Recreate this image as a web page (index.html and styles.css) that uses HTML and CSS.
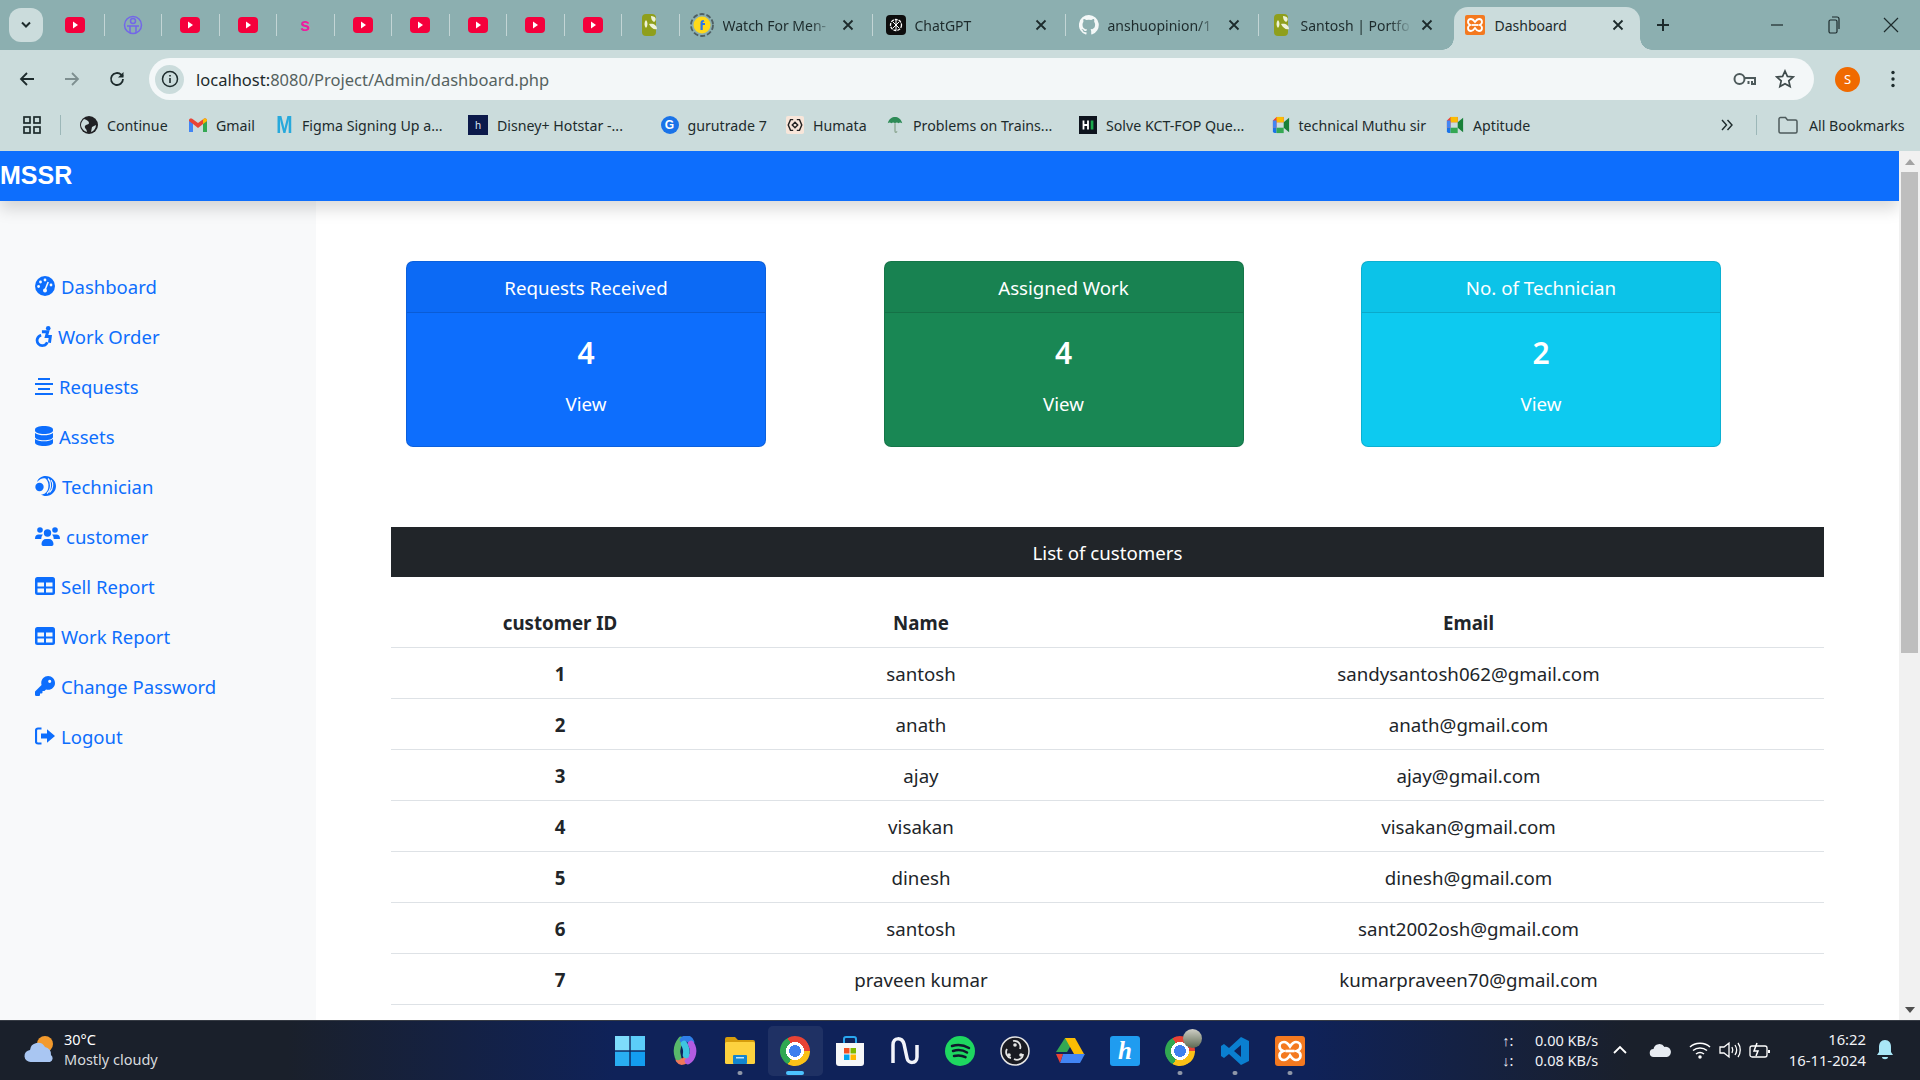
FILE: index.html
```html
<!DOCTYPE html>
<html lang="en">
<head>
	<meta charset="utf-8">
	<title>Dashboard</title>
	<link rel="stylesheet" href="styles.css">
</head>
<body>
<svg class="defs" width="0" height="0">
	<symbol id="yt" viewBox="0 0 20 16"><rect width="20" height="16" rx="4" fill="#f5003c"/><path d="M8 4.500l5 3.500-5 3.500z" fill="#fff"/></symbol>
	<symbol id="x" viewBox="0 0 12 12"><path d="M1.500 1.500l9 9M10.500 1.500l-9 9" stroke="#1d2b2c" stroke-width="1.800" fill="none"/></symbol>
	<symbol id="leaf" viewBox="0 0 20 24"><rect x="2" y="1" width="14" height="22" rx="4" fill="#8f9f1c"/><path d="M11 3c5 0 6 4 3 6-2-1-3-3-3-6zM9 11c4-1 8 1 8 5-3 1-6-1-8-5zM6 7c2 2 2 6 0 8-2-2-2-6 0-8z" fill="#eef2d8"/></symbol>
	<symbol id="meet" viewBox="0 0 20 20"><path d="M1 5l4-4h8v6H5v6H1z" fill="#ea4335"/><path d="M5 1h8v6H5z" fill="#fbbc04"/><path d="M1 13h4v6H3a2 2 0 0 1-2-2z" fill="#1a73e8"/><path d="M5 13h8v6H5z" fill="#34a853"/><path d="M13 7l6-5v16l-6-5z" fill="#188038"/><rect x="1" y="5" width="4" height="8" fill="#4285f4"/></symbol>
	<symbol id="gauge" viewBox="0 0 20 20"><circle cx="10" cy="10" r="10" fill="currentColor"/><g fill="#f8f9fa"><circle cx="10" cy="4" r="1.400"/><circle cx="5.500" cy="6" r="1.400"/><circle cx="3.600" cy="10.500" r="1.400"/><circle cx="16" cy="9" r="1.400"/><circle cx="10" cy="14.500" r="2"/></g><path d="M10 14l3.200-8" stroke="#f8f9fa" stroke-width="1.600"/></symbol>
	<symbol id="chair" viewBox="0 0 16 20"><circle cx="12.500" cy="2.200" r="2.200" fill="currentColor"/><path d="M6.500 5.500h5.500l-1.300 4.500h3.800l-.8 6" fill="none" stroke="currentColor" stroke-width="2.800"/><path d="M5.800 8.800a5 5 0 1 0 5.800 6.600" fill="none" stroke="currentColor" stroke-width="2.600"/></symbol>
	<symbol id="lines" viewBox="0 0 18 18"><path d="M3 2h12M0 7h18M3 12h12M0 17h18" stroke="currentColor" stroke-width="2.200" fill="none"/></symbol>
	<symbol id="db" viewBox="0 0 18 20"><path d="M0 3.500C0 1.500 4 0 9 0s9 1.500 9 3.500v1C18 6.500 14 8 9 8S0 6.500 0 4.500z" fill="currentColor"/><path d="M0 7c2 1.700 5.500 2.300 9 2.300S16 8.700 18 7v4c0 2-4 3.300-9 3.300S0 13 0 11z" fill="currentColor"/><path d="M0 13c2 1.700 5.500 2.300 9 2.300S16 14.700 18 13v3.500C18 18.500 14 20 9 20s-9-1.500-9-3.500z" fill="currentColor"/></symbol>
	<symbol id="speak" viewBox="0 0 21 20"><circle cx="4.500" cy="11" r="4.200" fill="currentColor"/><path d="M2 6C3 2.500 6.500 0 10.500 0 16 0 21 4.500 21 10s-4.500 10-10 10c-2 0-4-.6-5-1.500 3 .2 6-2 7-5.500s.5-8-2.500-10.500C8 1.500 4.500 3 2 6z" fill="currentColor"/><path d="M13 2.500c3.500 3.500 3.500 11-1 15M16 4c2.500 3 2.500 9-1.500 12.500" stroke="#f8f9fa" stroke-width="1.100" fill="none"/></symbol>
	<symbol id="users" viewBox="0 0 25 20"><circle cx="5" cy="4" r="2.800" fill="currentColor"/><circle cx="20" cy="4" r="2.800" fill="currentColor"/><circle cx="12.500" cy="7" r="3.700" fill="currentColor"/><path d="M0 12.500C0 10 1.500 8.500 3.500 8.500h3c.5 0 1 .1 1.400.3-1 1-1.600 2.500-1.600 4.200H.5a.5.5 0 0 1-.5-.5zM25 12.500C25 10 23.500 8.500 21.500 8.500h-3c-.5 0-1 .1-1.400.3 1 1 1.600 2.500 1.600 4.200h5.800a.5.5 0 0 0 .5-.5zM6.500 18c0-3 2-5 4.500-5h3c2.500 0 4.500 2 4.500 5 0 1-.7 2-1.700 2H8.200c-1 0-1.700-1-1.700-2z" fill="currentColor"/></symbol>
	<symbol id="table" viewBox="0 0 20 18"><rect width="20" height="18" rx="2.500" fill="currentColor"/><path d="M2.500 5.500h6.500v4H2.500zM11 5.500h6.500v4H11zM2.500 11.500h6.500v4H2.500zM11 11.500h6.500v4H11z" fill="#f8f9fa"/></symbol>
	<symbol id="key" viewBox="0 0 512 512"><path d="M336 352c97.200 0 176-78.800 176-176S433.200 0 336 0S160 78.800 160 176c0 18.700 2.900 36.800 8.300 53.700L7 391c-4.500 4.500-7 10.600-7 17v80c0 13.300 10.700 24 24 24h80c13.300 0 24-10.700 24-24V448h40c13.300 0 24-10.700 24-24V384h40c6.400 0 12.500-2.500 17-7l33.300-33.300c16.900 5.400 35 8.300 53.700 8.300zM376 96a40 40 0 1 1 0 80 40 40 0 1 1 0-80z" fill="currentColor"/></symbol>
	<symbol id="logout" viewBox="0 0 20 18"><path d="M6.500 1.500H3A2 2 0 0 0 1 3.500v11a2 2 0 0 0 2 2h3.500" fill="none" stroke="currentColor" stroke-width="2.200"/><path d="M6 6.500h6V2.200L20 9l-8 6.800v-4.300H6z" fill="currentColor"/></symbol>
	<symbol id="xampp" viewBox="0 0 20 20"><rect width="20" height="20" rx="2" fill="#f4791f"/><path d="M6 4c2 0 3 1.500 4 3 1-1.500 2-3 4-3s3 1.500 3 3-1 2.500-2.500 3c1.500.5 2.500 1.500 2.500 3s-1 3-3 3-3-1.500-4-3c-1 1.500-2 3-4 3s-3-1.500-3-3 1-2.500 2.500-3C4 9.500 3 8.500 3 7s1-3 3-3z" fill="none" stroke="#fff" stroke-width="1.800"/><path d="M7 10h6" stroke="#fff" stroke-width="1.800"/></symbol>
</svg>

<div class="screen">
	<div class="tabstrip">
		<div class="tab-list-btn"><svg width="12" height="8" viewBox="0 0 12 8"><path d="M2 1.500l4 4 4-4" stroke="#1d2b2c" stroke-width="2" fill="none"/></svg></div>
		<div class="pin"><svg class="yt"><use href="#yt"/></svg></div><i class="sep"></i>
		<div class="pin"><svg width="20" height="20" viewBox="0 0 20 20" fill="none" stroke="#7367e8" stroke-width="1.500"><circle cx="10" cy="10" r="8.500"/><circle cx="10" cy="6" r="2.500"/><path d="M4 11h12M7 11v7M13 11v7"/></svg></div><i class="sep"></i>
		<div class="pin"><svg class="yt"><use href="#yt"/></svg></div><i class="sep"></i>
		<div class="pin"><svg class="yt"><use href="#yt"/></svg></div><i class="sep"></i>
		<div class="pin"><span class="pink-s">s</span></div><i class="sep"></i>
		<div class="pin"><svg class="yt"><use href="#yt"/></svg></div><i class="sep"></i>
		<div class="pin"><svg class="yt"><use href="#yt"/></svg></div><i class="sep"></i>
		<div class="pin"><svg class="yt"><use href="#yt"/></svg></div><i class="sep"></i>
		<div class="pin"><svg class="yt"><use href="#yt"/></svg></div><i class="sep"></i>
		<div class="pin"><svg class="yt"><use href="#yt"/></svg></div><i class="sep"></i>
		<div class="pin"><svg class="fav-tall"><use href="#leaf"/></svg></div><i class="sep"></i>

		<div class="tab">
			<svg class="fav-lg" viewBox="0 0 24 24"><circle cx="12" cy="12" r="11" fill="none" stroke="#4f5f64" stroke-width="1.800" stroke-dasharray="5 2"/><circle cx="12" cy="12" r="8.500" fill="#ffd91a"/><path d="M13.500 7c-2 0-3 1-3 3v7h2.200v-5h2.300v-2h-2.300c0-1 .3-1.200 1.800-1.200z" fill="#2874f0"/></svg>
			<span class="tab-title">Watch For Men-</span>
			<svg class="close"><use href="#x"/></svg>
		</div><i class="sep"></i>
		<div class="tab">
			<svg class="fav" viewBox="0 0 20 20"><rect width="20" height="20" rx="4" fill="#0d0d0d"/><circle cx="10" cy="10" r="5.500" fill="none" stroke="#fff" stroke-width="1.300" stroke-dasharray="3 1"/><path d="M7 7l6 6M13 7l-6 6M10 5v10" stroke="#fff"/></svg>
			<span class="tab-title">ChatGPT</span>
			<svg class="close"><use href="#x"/></svg>
		</div><i class="sep"></i>
		<div class="tab">
			<svg class="fav" viewBox="0 0 20 20"><path d="M10 0a10 10 0 0 0-3.200 19.500c.5.100.7-.2.700-.5v-1.800c-2.800.6-3.400-1.200-3.400-1.200-.5-1.100-1.100-1.400-1.100-1.400-.9-.6.100-.6.100-.6 1 .1 1.500 1 1.500 1 .9 1.500 2.300 1.100 2.900.8.100-.6.300-1.100.6-1.300-2.200-.3-4.600-1.100-4.600-5 0-1.100.4-2 1-2.700-.1-.3-.4-1.300.1-2.700 0 0 .8-.3 2.700 1a9.400 9.400 0 0 1 5 0c1.900-1.300 2.700-1 2.700-1 .5 1.400.2 2.400.1 2.700.6.700 1 1.600 1 2.700 0 3.900-2.300 4.700-4.600 5 .4.300.7.900.7 1.900V19c0 .3.200.6.700.5A10 10 0 0 0 10 0z" fill="#f4f8f8"/></svg>
			<span class="tab-title">anshuopinion/1</span>
			<svg class="close"><use href="#x"/></svg>
		</div><i class="sep"></i>
		<div class="tab tab-wide">
			<svg class="fav-tall"><use href="#leaf"/></svg>
			<span class="tab-title">Santosh | Portfo</span>
			<svg class="close"><use href="#x"/></svg>
		</div>
		<div class="tab tab-active">
			<svg class="fav"><use href="#xampp"/></svg>
			<span class="tab-title">Dashboard</span>
			<svg class="close"><use href="#x"/></svg>
		</div>
		<svg class="newtab" width="16" height="16" viewBox="0 0 16 16"><path d="M8 2v12M2 8h12" stroke="#1d2b2c" stroke-width="2"/></svg>
		<div class="win-btns">
			<svg width="14" height="14" viewBox="0 0 14 14"><path d="M1 7h12" stroke="#1d2b2c" stroke-width="1.200"/></svg>
			<svg width="14" height="18" viewBox="0 0 14 18" fill="none" stroke="#1d2b2c" stroke-width="1.200"><rect x="2" y="4" width="8" height="13" rx="1.500"/><path d="M5 1h5a2 2 0 0 1 2 2v10"/></svg>
			<svg width="16" height="16" viewBox="0 0 16 16"><path d="M1 1l14 14M15 1L1 15" stroke="#1d2b2c" stroke-width="1.200"/></svg>
		</div>
	</div>

	<div class="toolbar">
		<svg class="nav-icon" viewBox="0 0 18 18"><path d="M16 9H3M9 3L3 9l6 6" fill="none" stroke="#1d2b2c" stroke-width="1.800"/></svg>
		<svg class="nav-icon" viewBox="0 0 18 18"><path d="M2 9h13M9 3l6 6-6 6" fill="none" stroke="#7e8f90" stroke-width="1.800"/></svg>
		<svg class="nav-icon" viewBox="0 0 18 18"><path d="M15 9a6 6 0 1 1-1.800-4.300L15 6.500" fill="none" stroke="#1d2b2c" stroke-width="1.800"/><path d="M15.500 2v5.500H10z" fill="#1d2b2c"/></svg>
		<div class="omnibox">
			<span class="info-chip"><svg width="18" height="18" viewBox="0 0 18 18"><circle cx="9" cy="9" r="7.500" fill="none" stroke="#1d2b2c" stroke-width="1.500"/><path d="M9 8v5M9 5v1.600" stroke="#1d2b2c" stroke-width="1.600"/></svg></span>
			<span class="url"><b>localhost:</b>8080/Project/Admin/dashboard.php</span>
			<svg class="omni-key" width="24" height="16" viewBox="0 0 24 16" fill="none" stroke="#4d5a5b" stroke-width="2"><circle cx="6.500" cy="8" r="5"/><path d="M11.500 7H22v6h-3V10M15.500 10v3"/></svg>
			<svg class="omni-star" width="20" height="20" viewBox="0 0 20 20"><path d="M10 2l2.400 5.400 5.800.6-4.400 3.900 1.300 5.700L10 14.700l-5.100 2.900 1.300-5.700L1.800 8l5.800-.6z" fill="none" stroke="#3f4b4c" stroke-width="1.700"/></svg>
		</div>
		<span class="avatar">S</span>
		<svg class="kebab" width="4" height="18" viewBox="0 0 4 18"><circle cx="2" cy="2.500" r="1.700" fill="#1d2b2c"/><circle cx="2" cy="9" r="1.700" fill="#1d2b2c"/><circle cx="2" cy="15.500" r="1.700" fill="#1d2b2c"/></svg>
	</div>

	<div class="bookmarks">
		<svg class="apps" width="18" height="18" viewBox="0 0 18 18" fill="none" stroke="#1d2b2c" stroke-width="1.700"><rect x="1" y="1" width="6" height="6"/><rect x="11" y="1" width="6" height="6"/><rect x="1" y="11" width="6" height="6"/><rect x="11" y="11" width="6" height="6"/></svg>
		<i class="bm-sep"></i>
		<div class="bm-list">
			<div class="bm"><svg class="bm-ico" viewBox="0 0 18 18"><circle cx="9" cy="9" r="9" fill="#202124"/><path d="M4 3c3 1 5 2 5 4s-3 1-4 3 2 3 2 6c-3-1-6-4-6-7 0-2 1-4 3-6zM12 11l4-2c0 3-2 6-5 7z" fill="#cbdcdc"/></svg><span>Continue</span></div>
			<div class="bm"><svg class="bm-ico" viewBox="0 0 18 14"><path d="M0 2.500V14h4V6l5 4 5-4v8h4V2.500C18 .5 16 0 14.500 1L9 5 3.500 1C2 0 0 .5 0 2.500z" fill="#ea4335"/><path d="M0 3v11h4V6z" fill="#4285f4"/><path d="M14 6v8h4V3z" fill="#34a853"/><path d="M18 2.500C18 .5 16 0 14.500 1L14 1.500V6l4-3z" fill="#fbbc04"/></svg><span>Gmail</span></div>
			<div class="bm"><span class="figma-m">M</span><span>Figma Signing Up a...</span></div>
			<div class="bm"><span class="hotstar">h</span><span>Disney+ Hotstar -...</span></div>
			<div class="bm"><span class="guru">G</span><span>gurutrade 7</span></div>
			<div class="bm"><svg class="bm-ico" viewBox="0 0 20 20"><rect width="20" height="20" rx="2" fill="#f8e6da"/><path d="M8 4H5L2.500 10 5 16h3M12 4h3l2.500 6L15 16h-3M10 7l3 3-3 3-3-3z" fill="none" stroke="#222" stroke-width="1.600"/></svg><span>Humata</span></div>
			<div class="bm"><svg class="bm-ico" viewBox="0 0 18 20"><path d="M1 8C2 3 6 1 9 1s7 2 8 7c-2-1-3-1-4 0-1-1-3-1-4 0-1-1-3-1-4 0-1-1-3-1-4 0z" fill="#2e8b57"/><path d="M9 8v9c0 1.500 2 1.500 2 0" fill="none" stroke="#8aa58f" stroke-width="1.400"/></svg><span>Problems on Trains...</span></div>
			<div class="bm"><svg class="bm-ico" viewBox="0 0 20 20"><rect width="20" height="20" fill="#0e141e"/><path d="M4 5h2v10H4zM9 5h2v10H9zM5 9h5v2H5z" fill="#fff"/><rect x="13" y="5" width="3" height="10" fill="#1ba94c"/></svg><span>Solve KCT-FOP Que...</span></div>
			<div class="bm"><svg class="bm-ico"><use href="#meet"/></svg><span>technical Muthu sir</span></div>
			<div class="bm"><svg class="bm-ico"><use href="#meet"/></svg><span>Aptitude</span></div>
		</div>
		<svg class="more" width="12" height="12" viewBox="0 0 12 12" fill="none" stroke="#1d2b2c" stroke-width="1.400"><path d="M1 1l4.500 5L1 11M6.500 1L11 6l-4.500 5"/></svg>
		<i class="bm-sep"></i>
		<svg class="folder" width="20" height="18" viewBox="0 0 20 18"><path d="M1 3a1.500 1.500 0 0 1 1.500-1.500h5l2 2.500h8A1.500 1.500 0 0 1 19 5.500v10a1.500 1.500 0 0 1-1.500 1.500h-15A1.500 1.500 0 0 1 1 15.500z" fill="none" stroke="#4d5a5b" stroke-width="1.500"/></svg>
		<span class="all-bm">All Bookmarks</span>
	</div>

	<div class="viewport">
		<div class="page">
			<header class="navbar">MSSR</header>
			<div class="page-body">
				<nav class="sidebar">
					<a class="side-link"><svg class="ic-20"><use href="#gauge"/></svg>Dashboard</a>
					<a class="side-link"><svg class="ic-chair"><use href="#chair"/></svg>Work Order</a>
					<a class="side-link"><svg class="ic-18"><use href="#lines"/></svg>Requests</a>
					<a class="side-link"><svg class="ic-18"><use href="#db"/></svg>Assets</a>
					<a class="side-link"><svg class="ic-21"><use href="#speak"/></svg>Technician</a>
					<a class="side-link"><svg class="ic-25"><use href="#users"/></svg>customer</a>
					<a class="side-link"><svg class="ic-20"><use href="#table"/></svg>Sell Report</a>
					<a class="side-link"><svg class="ic-20"><use href="#table"/></svg>Work Report</a>
					<a class="side-link"><svg class="ic-20"><use href="#key"/></svg>Change Password</a>
					<a class="side-link"><svg class="ic-20"><use href="#logout"/></svg>Logout</a>
				</nav>
				<main class="content">
					<div class="cards">
						<div class="card card-blue">
							<div class="card-head">Requests Received</div>
							<div class="card-body"><div class="card-num">4</div><div class="card-view">View</div></div>
						</div>
						<div class="card card-green">
							<div class="card-head">Assigned Work</div>
							<div class="card-body"><div class="card-num">4</div><div class="card-view">View</div></div>
						</div>
						<div class="card card-cyan">
							<div class="card-head">No. of Technician</div>
							<div class="card-body"><div class="card-num">2</div><div class="card-view">View</div></div>
						</div>
					</div>
					<div class="list-title">List of customers</div>
					<table class="list-table">
						<thead>
							<tr><th>customer ID</th><th>Name</th><th>Email</th></tr>
						</thead>
						<tbody>
							<tr><th>1</th><td>santosh</td><td>sandysantosh062@gmail.com</td></tr>
							<tr><th>2</th><td>anath</td><td>anath@gmail.com</td></tr>
							<tr><th>3</th><td>ajay</td><td>ajay@gmail.com</td></tr>
							<tr><th>4</th><td>visakan</td><td>visakan@gmail.com</td></tr>
							<tr><th>5</th><td>dinesh</td><td>dinesh@gmail.com</td></tr>
							<tr><th>6</th><td>santosh</td><td>sant2002osh@gmail.com</td></tr>
							<tr><th>7</th><td>praveen kumar</td><td>kumarpraveen70@gmail.com</td></tr>
						</tbody>
					</table>
				</main>
			</div>
		</div>
		<div class="scrollbar">
			<div class="sb-btn"><i class="arrow-up"></i></div>
			<div class="sb-thumb"></div>
			<div class="sb-track"></div>
			<div class="sb-btn"><i class="arrow-down"></i></div>
		</div>
	</div>

	<footer class="taskbar">
		<div class="weather">
			<svg width="34" height="30" viewBox="0 0 34 30"><circle cx="22" cy="10" r="8" fill="#f39a2d"/><path d="M8 28a6 6 0 0 1-1-12 8 8 0 0 1 15-3 7 7 0 0 1 6 8 4 4 0 0 1-1 7z" fill="#a9c6f2"/></svg>
			<div class="weather-text"><div class="temp">30°C</div><div>Mostly cloudy</div></div>
		</div>
		<div class="task-icons">
			<div class="task"><svg class="t-ico" viewBox="0 0 30 30"><rect width="14.300" height="14.300" fill="#7edcfb"/><rect x="15.700" width="14.300" height="14.300" fill="#5ccdf9"/><rect y="15.700" width="14.300" height="14.300" fill="#29aef2"/><rect x="15.700" y="15.700" width="14.300" height="14.300" fill="#139df0"/></svg></div>
			<div class="task"><svg class="t-ico" viewBox="0 0 30 30" fill="none" stroke-width="6.500" stroke-linecap="round"><path d="M18 21c-3 5-7 6-9 3" stroke="#f0785a"/><path d="M11 4c-4 5-5 11-3 17" stroke="#58b86a"/><path d="M13 4c4-3 7-1 8 2" stroke="#2f7fe8"/><path d="M21 8c4 6 2 14-3 17" stroke="#b45ce0"/><path d="M14 8c2 3 3 6 2 11" stroke="#3ec5e0"/></svg></div>
			<div class="task task-open"><svg class="t-ico" viewBox="0 0 30 30"><path d="M0 3a2 2 0 0 1 2-2h8l3 3h15a2 2 0 0 1 2 2v6H0z" fill="#d69d0c"/><rect y="6" width="30" height="22" rx="1.500" fill="#fdd23f"/><rect x="8" y="19" width="14" height="9" rx="1" fill="#1285cf"/><rect x="11" y="21" width="8" height="1.500" fill="#bfe4f8"/></svg></div>
			<div class="task task-active"><span class="chrome"></span></div>
			<div class="task"><svg class="t-ico" viewBox="0 0 30 30"><path d="M9 8V3a2 2 0 0 1 2-2h8a2 2 0 0 1 2 2v5" fill="none" stroke="#29a7ef" stroke-width="2"/><path d="M1 7h28v20a3 3 0 0 1-3 3H4a3 3 0 0 1-3-3z" fill="#f6f7f8"/><rect x="9" y="12" width="5.500" height="5.500" fill="#f25022"/><rect x="15.500" y="12" width="5.500" height="5.500" fill="#7fba00"/><rect x="9" y="18.500" width="5.500" height="5.500" fill="#00a4ef"/><rect x="15.500" y="18.500" width="5.500" height="5.500" fill="#ffb900"/></svg></div>
			<div class="task"><svg class="t-ico" viewBox="0 0 30 30"><path d="M3 27V9c0-8 9-8 11-1l3 14c1 6 10 6 10-1V9" fill="none" stroke="#f2f4fa" stroke-width="3.500"/></svg></div>
			<div class="task"><svg class="t-ico" viewBox="0 0 30 30"><circle cx="15" cy="15" r="15" fill="#1ed760"/><path d="M7 10c6-2 12-1 17 2M8 15c5-1.500 10-1 14 1.500M9 20c4-1 8-.7 11.500 1.200" fill="none" stroke="#10182c" stroke-width="2.500" stroke-linecap="round"/></svg></div>
			<div class="task"><svg class="t-ico" viewBox="0 0 30 30"><circle cx="15" cy="15" r="14" fill="#1a1b22" stroke="#e6e6e6" stroke-width="1.500"/><path d="M13 5a6 6 0 0 1 7 8M7 13a6 6 0 0 0 4 9M23 18a6 6 0 0 1-9 5" fill="none" stroke="#e6e6e6" stroke-width="1.800"/><circle cx="15" cy="9" r="1.800" fill="#e6e6e6"/><circle cx="9" cy="19" r="1.800" fill="#e6e6e6"/><circle cx="21" cy="19" r="1.800" fill="#e6e6e6"/></svg></div>
			<div class="task"><svg class="t-ico" viewBox="0 0 30 28"><path d="M10 1h10l-5 9-3 5H1z" fill="#34a853"/><path d="M10 1h10l9 16H19z" fill="#fbbc04"/><path d="M8 17h22l-5 9H5z" fill="#4285f4"/><path d="M1 17h7l-3 9z" fill="#ea4335"/></svg></div>
			<div class="task"><span class="hubspot">h</span></div>
			<div class="task task-open"><span class="chrome"></span><span class="chrome-user"></span></div>
			<div class="task task-open"><svg class="t-ico" viewBox="0 0 30 30"><path d="M21 1l8 4v20l-8 4L9 18l-5 4-3-2V10l3-2 5 4zM21 9l-7 6 7 6z" fill="#0a7fd0"/></svg></div>
			<div class="task task-open"><svg class="t-ico"><use href="#xampp"/></svg></div>
		</div>
		<div class="tray">
			<div class="speed">
				<div class="speed-row"><span>↑:</span><span>0.00 KB/s</span></div>
				<div class="speed-row"><span>↓:</span><span>0.08 KB/s</span></div>
			</div>
			<svg class="tray-chev" width="16" height="10" viewBox="0 0 16 10"><path d="M2 8l6-6 6 6" fill="none" stroke="#fff" stroke-width="1.800"/></svg>
			<svg class="tray-ico" width="22" height="16" viewBox="0 0 22 16"><path d="M5 15a4 4 0 0 1-.5-8 6 6 0 0 1 11-2 5 5 0 0 1 2.500 10z" fill="#e8ecf2"/></svg>
			<svg class="tray-ico tray-wifi" width="22" height="18" viewBox="0 0 22 18" fill="none" stroke="#fff" stroke-width="1.500"><path d="M1 6c5-5 15-5 20 0M4 9.500c4-3.500 10-3.500 14 0M7 13c2.500-2 5.500-2 8 0"/><circle cx="11" cy="16" r="1" fill="#fff"/></svg>
			<svg class="tray-ico" width="22" height="18" viewBox="0 0 22 18" fill="none" stroke="#fff" stroke-width="1.300"><path d="M1 6h4l5-4v14l-5-4H1zM13 6c1 2 1 4 0 6M16 4c2 3 2 7 0 10M19 2c3 4 3 10 0 14"/></svg>
			<svg class="tray-ico" width="22" height="18" viewBox="0 0 22 18" fill="none" stroke="#fff" stroke-width="1.300"><rect x="1" y="5" width="17" height="11" rx="2"/><path d="M20 9v3" stroke-width="2"/><path d="M8 2L5 10h4l-2 5" stroke-width="1.500"/></svg>
			<div class="clock"><div>16:22</div><div>16-11-2024</div></div>
			<svg class="bell" width="18" height="22" viewBox="0 0 18 22"><path d="M9 1c-4 0-6 3-6 7v5l-2 3h16l-2-3V8c0-4-2-7-6-7z" fill="#a9e6f6"/><path d="M6 18h6c0 3-6 3-6 0z" fill="#a9e6f6"/></svg>
		</div>
	</footer>
</div>
</body>
</html>
```

FILE: styles.css
```css
* {
	box-sizing: border-box;
}
body {
	margin: 0;
	font-family: "Noto Sans", sans-serif;
	color: #212529;
}
.defs {
	display: block;
	height: 0;
}
.screen {
	width: 1920px;
	height: 1080px;
	display: flex;
	flex-direction: column;
	overflow: hidden;
	background: #cbdcdc;
}

/* browser tabs */
.tabstrip {
	height: 50px;
	flex: none;
	display: flex;
	align-items: center;
	padding: 7px 0 0 0;
	background: #8cafb0;
	color: #1d2b2c;
	font-size: 14px;
}
.tab-list-btn {
	width: 34px;
	height: 34px;
	margin: -7px 4px 0 9px;
	display: flex;
	align-items: center;
	justify-content: center;
	background: #cbdcdc;
	border-radius: 12px;
}
.pin {
	width: 56.500px;
	display: flex;
	justify-content: center;
	align-items: center;
	margin-top: -7px;
}
.yt {
	width: 20px;
	height: 16px;
}
.fav {
	width: 20px;
	height: 20px;
	flex: none;
}
.fav-tall {
	width: 20px;
	height: 24px;
	flex: none;
}
.fav-lg {
	width: 24px;
	height: 24px;
	flex: none;
	margin-left: -3px;
}
.pink-s {
	font: bold 18px "Liberation Sans", sans-serif;
	color: #ec1ea0;
	line-height: 20px;
}
.sep {
	width: 1px;
	height: 22px;
	flex: none;
	margin-top: -7px;
	background: #c3d5d5;
}
.tab {
	width: 192px;
	height: 43px;
	flex: none;
	display: flex;
	align-items: center;
	gap: 9px;
	padding: 0 18px 0 13px;
	margin-top: -7px;
}
.tab-wide {
	width: 195px;
	padding-right: 21px;
}
.tab-title {
	flex: 1;
	min-width: 0;
	white-space: nowrap;
	overflow: hidden;
	-webkit-mask-image: linear-gradient(90deg, #000 80%, transparent);
	mask-image: linear-gradient(90deg, #000 80%, transparent);
}
.close {
	width: 12px;
	height: 12px;
	flex: none;
}
.tab-active {
	position: relative;
	width: 186px;
	margin-top: 0;
	background: #cbdcdc;
	border-radius: 14px 14px 0 0;
	padding: 0 16px 7px 11px;
}
.tab-active .tab-title {
	-webkit-mask-image: none;
	mask-image: none;
	margin-left: 1px;
}
.tab-active::before,
.tab-active::after {
	content: "";
	position: absolute;
	bottom: 0;
	width: 12px;
	height: 12px;
}
.tab-active::before {
	left: -12px;
	background: radial-gradient(circle at 0 0, transparent 11.500px, #cbdcdc 12px);
}
.tab-active::after {
	right: -12px;
	background: radial-gradient(circle at 100% 0, transparent 11.500px, #cbdcdc 12px);
}
.newtab {
	margin: -7px 0 0 15px;
}
.win-btns {
	margin: -7px 21px 0 auto;
	display: flex;
	align-items: center;
	gap: 42.500px;
}

/* address bar */
.toolbar {
	height: 58px;
	flex: none;
	display: flex;
	align-items: center;
	padding: 0 0 0 18px;
	background: #cbdcdc;
	border-radius: 10px 10px 0 0;
}
.nav-icon {
	width: 18px;
	height: 18px;
	margin-right: 27px;
}
.omnibox {
	width: 1665px;
	height: 42px;
	margin-left: -4px;
	display: flex;
	align-items: center;
	padding: 0 19px 0 6px;
	background: #f3f7f8;
	border-radius: 21px;
}
.info-chip {
	width: 29px;
	height: 29px;
	display: flex;
	align-items: center;
	justify-content: center;
	background: #cbdcdc;
	border-radius: 50%;
}
.url {
	margin-left: 12px;
	font-size: 16.500px;
	color: #55625f;
}
.url b {
	font-weight: 400;
	color: #1d2b2c;
}
.omni-key {
	margin-left: auto;
}
.omni-star {
	margin-left: 18px;
}
.avatar {
	width: 25px;
	height: 25px;
	margin-left: 21px;
	display: flex;
	align-items: center;
	justify-content: center;
	background: #f06a00;
	color: #fff;
	border-radius: 50%;
	font-size: 13px;
}
.kebab {
	margin-left: 31px;
}

/* bookmarks */
.bookmarks {
	height: 43px;
	flex: none;
	display: flex;
	align-items: center;
	padding: 0 0 9px 23px;
	color: #1d2b2c;
	font-size: 14.200px;
}
.bm-sep {
	width: 1px;
	height: 20px;
	margin: 0 19px;
	background: #9cb7b8;
	flex: none;
}
.bm-list {
	display: grid;
	grid-template-columns: 109px 86px 193px 192.500px 125.500px 100px 193px 192.500px 174.500px 90px;
	align-items: center;
}
.bm {
	display: flex;
	align-items: center;
	gap: 9px;
	white-space: nowrap;
}
.bm-ico {
	width: 18px;
	height: 18px;
	flex: none;
}
.figma-m {
	width: 18px;
	font: bold 23px/20px "Liberation Sans", sans-serif;
	color: #27a9dc;
	transform: scaleX(.85);
}
.hotstar {
	width: 20px;
	height: 20px;
	flex: none;
	background: #0c1a4b;
	color: #dfe6f5;
	font-size: 10px;
	line-height: 20px;
	text-align: center;
	overflow: hidden;
}
.guru {
	width: 18px;
	height: 18px;
	flex: none;
	border-radius: 50%;
	background: #1a73e8;
	color: #fff;
	font: bold 12px/18px "Liberation Sans", sans-serif;
	text-align: center;
}
.more {
	margin-left: 185px;
}
.bookmarks > .bm-sep:nth-of-type(2) {
	margin: 0 21px 0 23px;
}
.all-bm {
	margin-left: 11px;
	white-space: nowrap;
}

/* page inside browser */
.viewport {
	flex: 1;
	min-height: 0;
	display: flex;
	background: #fff;
}
.page {
	flex: 1;
	min-width: 0;
	overflow: hidden;
}
.navbar {
	height: 50px;
	padding-top: 8px;
	position: relative;
	background: #0d6efd;
	color: #fff;
	font: bold 25px/32px "Liberation Sans", sans-serif;
	box-shadow: 0 8px 16px rgba(0, 0, 0, .15);
}
.page-body {
	display: flex;
}
.sidebar {
	width: 316px;
	height: 819px;
	flex: none;
	padding-top: 60px;
	background: #f8f9fa;
}
.side-link {
	height: 50px;
	padding-left: 35px;
	display: flex;
	align-items: center;
	gap: 6px;
	font-size: 18.500px;
	color: #0d6efd;
}
.ic-chair {
	width: 17px;
	height: 21px;
}
.ic-18 {
	width: 18px;
	height: 20px;
}
.ic-20 {
	width: 20px;
	height: 20px;
}
.ic-21 {
	width: 21px;
	height: 20px;
}
.ic-25 {
	width: 25px;
	height: 20px;
}
.content {
	flex: 1;
	min-width: 0;
	padding: 60px 0 0 75px;
}
.cards {
	display: grid;
	grid-template-columns: repeat(3, 360px);
	column-gap: 117.500px;
	margin-left: 15px;
}
.card {
	height: 186px;
	color: #fff;
	text-align: center;
	border: 1px solid rgba(0, 0, 0, .125);
	border-radius: 7px;
	font-size: 18.700px;
}
.card-blue {
	background: #0d6efd;
}
.card-green {
	background: #198754;
}
.card-cyan {
	background: #0dcaf0;
}
.card-head {
	height: 51px;
	line-height: 52px;
	background: rgba(0, 0, 0, .03);
	border-bottom: 1px solid rgba(0, 0, 0, .125);
}
.card-body {
	padding-top: 19px;
}
.card-num {
	font-size: 30px;
	font-weight: 600;
	line-height: 42px;
}
.card-view {
	margin-top: 14px;
	line-height: 32px;
}
.list-title {
	width: 1433px;
	height: 50px;
	margin-top: 80px;
	line-height: 52px;
	text-align: center;
	background: #212529;
	color: #fff;
	font-size: 18.700px;
}
.list-table {
	width: 1433px;
	margin-top: 19px;
	border-collapse: collapse;
	table-layout: fixed;
	font-size: 18.700px;
}
.list-table th,
.list-table td {
	height: 51px;
	padding: 2px 0 0;
	text-align: center;
	font-weight: 400;
	border-bottom: 1px solid #dee2e6;
}
.list-table th {
	font-weight: 700;
}
.list-table tr > :nth-child(1) {
	width: 338px;
}
.list-table tr > :nth-child(2) {
	width: 384px;
}
.scrollbar {
	width: 21px;
	flex: none;
	display: flex;
	flex-direction: column;
	background: #f1f1f1;
}
.sb-btn {
	height: 21px;
	flex: none;
	display: flex;
	align-items: center;
	justify-content: center;
}
.arrow-up,
.arrow-down {
	border-left: 5px solid transparent;
	border-right: 5px solid transparent;
}
.arrow-up {
	border-bottom: 6px solid #a3a3a3;
}
.arrow-down {
	border-top: 6px solid #505050;
}
.sb-thumb {
	height: 481px;
	flex: none;
	margin: 0 2px;
	background: #bebebe;
}
.sb-track {
	flex: 1;
}

/* windows taskbar */
.taskbar {
	height: 60px;
	flex: none;
	display: grid;
	grid-template-columns: 1fr auto 1fr;
	align-items: center;
	color: #f0f2f6;
	font-size: 14.500px;
	background: linear-gradient(90deg, #1a202b 0, #1a202b 15%, #0f2259 32%, #0f2259 68%, #1a202b 85%, #1a202b 100%);
	border-top: 1px solid #363b44;
}
.weather {
	display: flex;
	align-items: center;
	gap: 7px;
	padding: 0 0 4px 23px;
}
.weather-text {
	line-height: 20px;
	color: #d7dade;
}
.temp {
	color: #fff;
}
.task-icons {
	display: flex;
}
.task {
	position: relative;
	width: 55px;
	height: 50px;
	display: flex;
	align-items: center;
	justify-content: center;
}
.t-ico {
	width: 30px;
	height: 30px;
}
.task-open::after,
.task-active::after {
	content: "";
	position: absolute;
	bottom: 1px;
	left: 50%;
	transform: translateX(-50%);
	height: 4px;
	border-radius: 2px;
}
.task-open::after {
	width: 5px;
	background: #8f97a8;
}
.task-active {
	background: rgba(255, 255, 255, .07);
	border-radius: 5px;
}
.task-active::after {
	width: 18px;
	background: #4cc2ff;
}
.chrome {
	width: 30px;
	height: 30px;
	border-radius: 50%;
	background:
		radial-gradient(circle, #3f80ee 0 27%, #fff 28% 42%, transparent 43%),
		conic-gradient(#e84335 0 33%, #fbc116 33% 66%, #31a851 66% 100%);
	transform: rotate(-30deg);
}
.chrome-user {
	position: absolute;
	top: 3px;
	left: 30px;
	width: 19px;
	height: 19px;
	border-radius: 50%;
	background: linear-gradient(#cfcfc6, #5d6a52);
}
.hubspot {
	width: 30px;
	height: 30px;
	border-radius: 3px;
	background: #1f9cf0;
	color: #fff;
	font: italic bold 25px/29px "Liberation Serif", serif;
	text-align: center;
}
.tray {
	display: flex;
	align-items: center;
	justify-content: flex-end;
	padding-bottom: 2px;
}
.speed {
	width: 96px;
	line-height: 20px;
}
.speed-row {
	display: flex;
	justify-content: space-between;
	white-space: nowrap;
}
.tray-chev {
	margin-left: 14px;
}
.tray-ico {
	margin-left: 8px;
}
.tray-chev + .tray-ico {
	margin-left: 21px;
}
.tray-wifi {
	margin-left: 18px;
}
.clock {
	margin-left: 17.500px;
	font-size: 14.800px;
	text-align: right;
	line-height: 21px;
	white-space: nowrap;
}
.bell {
	margin: 0 26px 0 10px;
}
```
